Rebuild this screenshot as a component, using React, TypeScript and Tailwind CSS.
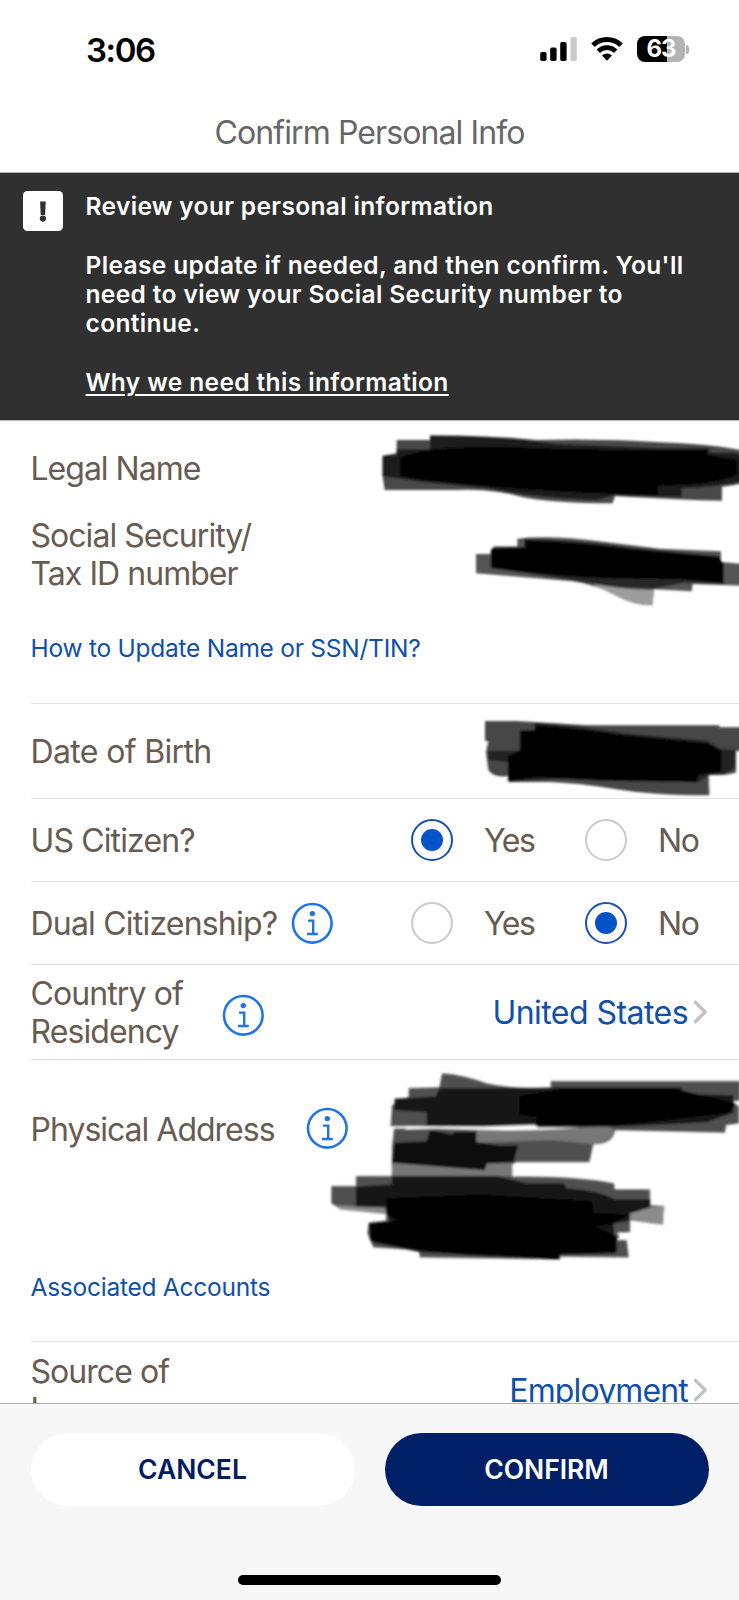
import React from "react";

const label = "relative top-[1px] text-[32px] leading-[38px] text-[#675b52]";
const link = "relative top-[1px] text-[24.5px] leading-[30px] tracking-[-0.25px] text-[#0f4fae]";
const value = "relative top-[1px] ml-auto text-[32px] leading-[38px] text-[#0f4fae]";

function StatusBar() {
  return (
    <div className="flex h-[98px] items-center justify-between pl-[86px] pr-[50px]">
      <div className="pt-[1px] text-[33px] leading-[40px] font-semibold tracking-[-1.4px] text-black">3:06</div>
      <div className="flex items-center">
        <svg width="37" height="26" viewBox="0 0 37 26" className="mr-[14px]">
          <rect x="0.2" y="16" width="6.4" height="9" rx="1.8" />
          <rect x="10.2" y="11.5" width="6.4" height="13.5" rx="1.8" />
          <rect x="20.2" y="6" width="6.4" height="19" rx="1.8" />
          <rect x="30.4" y="1" width="6.4" height="24" rx="1.8" fill="#cbcbcb" />
        </svg>
        <svg width="32" height="26" viewBox="0 0 32 26" className="mr-[14px]" fill="none" stroke="#000">
          <path d="M2 9.3a20 20 0 0 1 28 0" strokeWidth="5" />
          <path d="M7.3 15.2a12.4 12.4 0 0 1 17.4 0" strokeWidth="4.8" />
          <path d="M16 24.8l-5-5.3a7 7 0 0 1 10 0z" fill="#000" stroke="none" />
        </svg>
        <div className="flex items-center">
          <div className="flex h-[26px] w-[48px] items-center justify-center rounded-[8px] bg-[linear-gradient(90deg,#000_62%,#b3b3b3_62%)] text-[24px] leading-[26px] font-bold tracking-[-1px] text-white">
            63
          </div>
          <div className="ml-[1px] h-[9px] w-[3px] rounded-r-full bg-[#b3b3b3]" />
        </div>
      </div>
    </div>
  );
}

function Info({ className }: { className: string }) {
  return (
    <svg width="42" height="42" viewBox="0 0 42 42" className={className} fill="none" stroke="#1f75e6">
      <circle cx="21.3" cy="21.3" r="19.3" strokeWidth="2.6" />
      <circle cx="21.3" cy="11.6" r="2.7" fill="#1f75e6" stroke="none" />
      <path d="M17 18.6h5.2v13M16 32h10.8" strokeWidth="2.4" />
    </svg>
  );
}

function Radio({ on }: { on: boolean }) {
  return (
    <span
      className={
        on
          ? "flex size-[42px] items-center justify-center rounded-full border-2 border-[#1a51ae]"
          : "flex size-[42px] items-center justify-center rounded-full border-2 border-[#cacaca]"
      }
    >
      {on && <span className="size-[22px] rounded-full bg-[#0551c8]" />}
    </span>
  );
}

function YesNo({ yes }: { yes: boolean }) {
  return (
    <div className="ml-auto flex items-center pr-[20px]">
      <Radio on={yes} />
      <span className={`${label} ml-[31px] w-[101px] tracking-[-1.4px]`}>Yes</span>
      <Radio on={!yes} />
      <span className={`${label} ml-[31px] w-[61px] tracking-[-1.4px]`}>No</span>
    </div>
  );
}

function Chevron() {
  return (
    <svg width="16" height="26" viewBox="0 0 16 26" className="ml-[4px] mr-[1px]" fill="none" stroke="#c2c2c4" strokeWidth="3.4" strokeLinecap="round" strokeLinejoin="round">
      <path d="M3.4 3.4L13.2 13L3.4 22.6" />
    </svg>
  );
}

function Redactions() {
  return (
    <svg className="pointer-events-none absolute inset-0" width="739" height="1600" viewBox="0 0 739 1600">
      <defs>
        <filter id="soft">
          <feGaussianBlur stdDeviation="0.9" />
        </filter>
      </defs>
      <g filter="url(#soft)">
        <g transform="translate(370 420) scale(.33333)">
          <path fill="#484848" d="M80 60H180V46Q350 46 500 60Q700 55 900 68Q1040 74 1120 92V188Q1090 198 1056 200V242Q940 240 735 228L728 250Q560 250 460 232Q370 205 260 210H44L38 170V107L80 100Z" />
          <path fill="#1c1c1c" d="M80 88H180V48Q400 48 560 72L860 84H1018V98H1095L1120 110V184Q1040 202 935 205V232L735 226L680 240Q500 235 350 205L150 185L38 168V108L80 104Z" />
          <path fill="#040404" d="M160 92Q260 80 400 80Q620 90 800 90H1010V104L1100 120V165Q1010 200 865 196L862 226L600 216Q400 205 180 182L90 168V112Z" />
          <path fill="#555" d="M318 402H365L372 380H442V356Q540 345 700 365L870 386L1053 394V426L1120 432V497L968 492L965 514L852 508L847 556Q790 556 735 525Q680 495 610 484L318 460Z" />
          <path fill="#9d9d9d" d="M665 490Q760 512 852 510L847 556Q790 556 735 525Z" />
          <path fill="#272727" d="M362 392L372 380H462V356Q620 358 780 382L1050 408V428L1062 432V492L940 488L850 506Q720 502 640 486L362 444Z" />
          <path fill="#000" d="M364 388L466 384V362Q620 364 780 388L1046 412L1060 432V488L930 478L770 476Q580 474 364 444Z" />
        </g>
        <g transform="translate(370 690) scale(.33333)">
          <path fill="#474747" d="M344 93H440L650 106H1048V112H1120V180L1098 184V248L1062 255H1016L1018 316Q850 316 730 296Q630 280 540 276H418L415 258Q370 264 355 240L348 186L355 153H344Z" />
          <path fill="#202020" d="M355 182H450V120H494V98Q620 106 760 130L1010 152L1050 176L1096 180V235L1060 252L1016 256L980 278Q700 250 415 276V216L355 210Z" />
          <path fill="#000" d="M450 122H494V106Q630 116 760 136L1010 160L1055 184V245L985 254L978 276L700 272L500 262L415 272V200L450 180Z" />
        </g>
        <g transform="translate(320 960) scale(.33333)">
          <path fill="#505050" d="M266 384L358 382L366 340Q430 344 500 370Q590 390 692 382V363H1260V422L1235 424L1257 440V490L1218 495L1215 518L1050 514L885 510Q880 552 820 552L808 606L590 606L576 612V650Q760 646 882 670L884 688H990V735L1032 738L1028 794L930 780V816L890 818L898 830L888 840H920L926 892L720 890V898L300 892L296 870L160 862L142 820L146 788L198 782V760L60 746L34 730V678H108V648H216V560L222 506H256L258 498H212L216 435L266 410Z" />
          <path fill="#777" d="M470 508Q660 510 860 498Q890 506 878 528Q850 552 820 552L690 540L470 548Z" />
          <path fill="#777" d="M216 606L490 628L500 610H576V648H216Z" />
          <path fill="#8b8b8b" d="M930 744L1032 738L1028 794L930 778ZM42 735L196 744V762L60 748Z" />
          <path fill="#141414" d="M358 384H690L710 382H1085V402L1240 406V458L1160 486L890 500H650L640 490L500 498L320 502V456L222 450L224 416L348 410Z" />
          <path fill="#000" d="M600 408L720 390H1080L1155 408L1248 432L1225 458L1050 478L870 496H650V470L600 464Z" />
          <path fill="#fff" d="M258 498L490 500L645 495L655 503L780 503Q640 514 520 510L350 506L256 508Z" />
          <path fill="#101010" d="M224 548L320 544L330 510L400 524V516H468V546L530 556H594L580 606L500 610L494 630L216 608Z" />
          <path fill="#151515" d="M108 680L216 674V648H530L620 670H730L740 686Q830 690 884 718H990V742L928 760V782L880 790L886 880L718 884V898L300 876L156 846L146 792L210 786L196 740H108Z" />
          <path fill="#000" d="M200 716L480 704L814 724L820 760L924 764L880 790L820 798L890 830V876L716 882L720 898L430 884L262 862L150 840V790L240 782L200 764Z" />
        </g>
      </g>
    </svg>
  );
}

export default function App() {
  return (
    <div className="relative flex h-[1600px] w-[739px] flex-col overflow-hidden bg-white font-['Inter',sans-serif]">
      <StatusBar />
      <header className="flex h-[75px] justify-center border-b border-[#b5b5b5] pt-[15px]">
        <h1 className="text-[32px] leading-[40px] font-normal tracking-[-0.9px] text-[#666]">Confirm Personal Info</h1>
      </header>
      <section className="flex h-[248px] shrink-0 border-b border-[#b5b5b5] bg-[#303030] pl-[23px] pt-[18px] text-white">
        <svg width="40" height="40" viewBox="0 0 40 40" className="mr-[22.5px]">
          <rect width="40" height="40" rx="4.5" fill="#fff" />
          <path d="M17.1 10.5h5.6l-.6 13.5h-4.4z" fill="#303030" />
          <circle cx="19.9" cy="27.6" r="3.1" fill="#303030" />
        </svg>
        <div className="pt-[1px] text-[24.5px] leading-[29.35px] font-semibold">
          <p className="tracking-[0.35px]">Review your personal information</p>
          <p className="mt-[29.35px] tracking-[0.37px]">
            Please update if needed, and then confirm. You'll
            <br />
            need to view your Social Security number to
            <br />
            continue.
          </p>
          <a className="mt-[29.35px] block tracking-[0.38px] underline decoration-2 underline-offset-[3px]">Why we need this information</a>
        </div>
      </section>

      <main className="h-[982px] shrink-0 overflow-hidden pl-[30.5px]">
        <div className="h-[283px] border-b border-[#e3e3e3] pt-[28px]">
          <div className={`${label} tracking-[-1px]`}>Legal Name</div>
          <div className={`${label} mt-[29px] tracking-[-0.96px]`}>
            Social Security/
            <br />
            Tax ID number
          </div>
          <div className={`${link} mt-[40px]`}>How to Update Name or SSN/TIN?</div>
        </div>
        <div className="flex h-[95px] items-center border-b border-[#e3e3e3]">
          <span className={`${label} tracking-[-0.65px]`}>Date of Birth</span>
        </div>
        <div className="flex h-[83px] items-center border-b border-[#e3e3e3]">
          <span className={`${label} tracking-[-0.87px]`}>US Citizen?</span>
          <YesNo yes />
        </div>
        <div className="flex h-[83px] items-center border-b border-[#e3e3e3]">
          <span className={`${label} w-[260px] whitespace-nowrap tracking-[-0.8px]`}>Dual Citizenship?</span>
          <Info className="" />
          <YesNo yes={false} />
        </div>
        <div className="flex h-[95px] items-center border-b border-[#e3e3e3]">
          <span className={`${label} w-[191px] tracking-[-0.9px]`}>
            Country of
            <br />
            Residency
          </span>
          <Info className="mt-[6px]" />
          <span className={`${value} tracking-[-0.55px]`}>United States</span>
          <Chevron />
          <span className="w-[30px]" />
        </div>
        <div className="h-[282px] border-b border-[#e3e3e3] pt-[47px]">
          <div className="flex h-[42px] items-center">
            <span className={`${label} w-[275px] whitespace-nowrap pt-[2px] tracking-[-1px]`}>Physical Address</span>
            <Info className="" />
          </div>
          <div className={`${link} mt-[122px]`}>Associated Accounts</div>
        </div>
        <div className="flex h-[95px] items-center">
          <span className={`${label} tracking-[-0.95px]`}>
            Source of
            <br />
            Income
          </span>
          <span className={`${value} tracking-[-0.85px]`}>Employment</span>
          <Chevron />
          <span className="w-[30px]" />
        </div>
      </main>

      <footer className="flex flex-1 flex-col items-center border-t border-[#b0b0b0] bg-[#f7f7f7] pt-[29px]">
        <div className="flex gap-[30px]">
          <button className="h-[73px] w-[324px] rounded-full bg-white text-[26.5px] font-semibold text-[#031c63]">CANCEL</button>
          <button className="h-[73px] w-[324px] rounded-full bg-[#001f66] text-[26.5px] font-semibold text-white">CONFIRM</button>
        </div>
        <div className="mt-[69px] h-[10px] w-[263px] shrink-0 rounded-full bg-black" />
      </footer>
      <Redactions />
    </div>
  );
}
